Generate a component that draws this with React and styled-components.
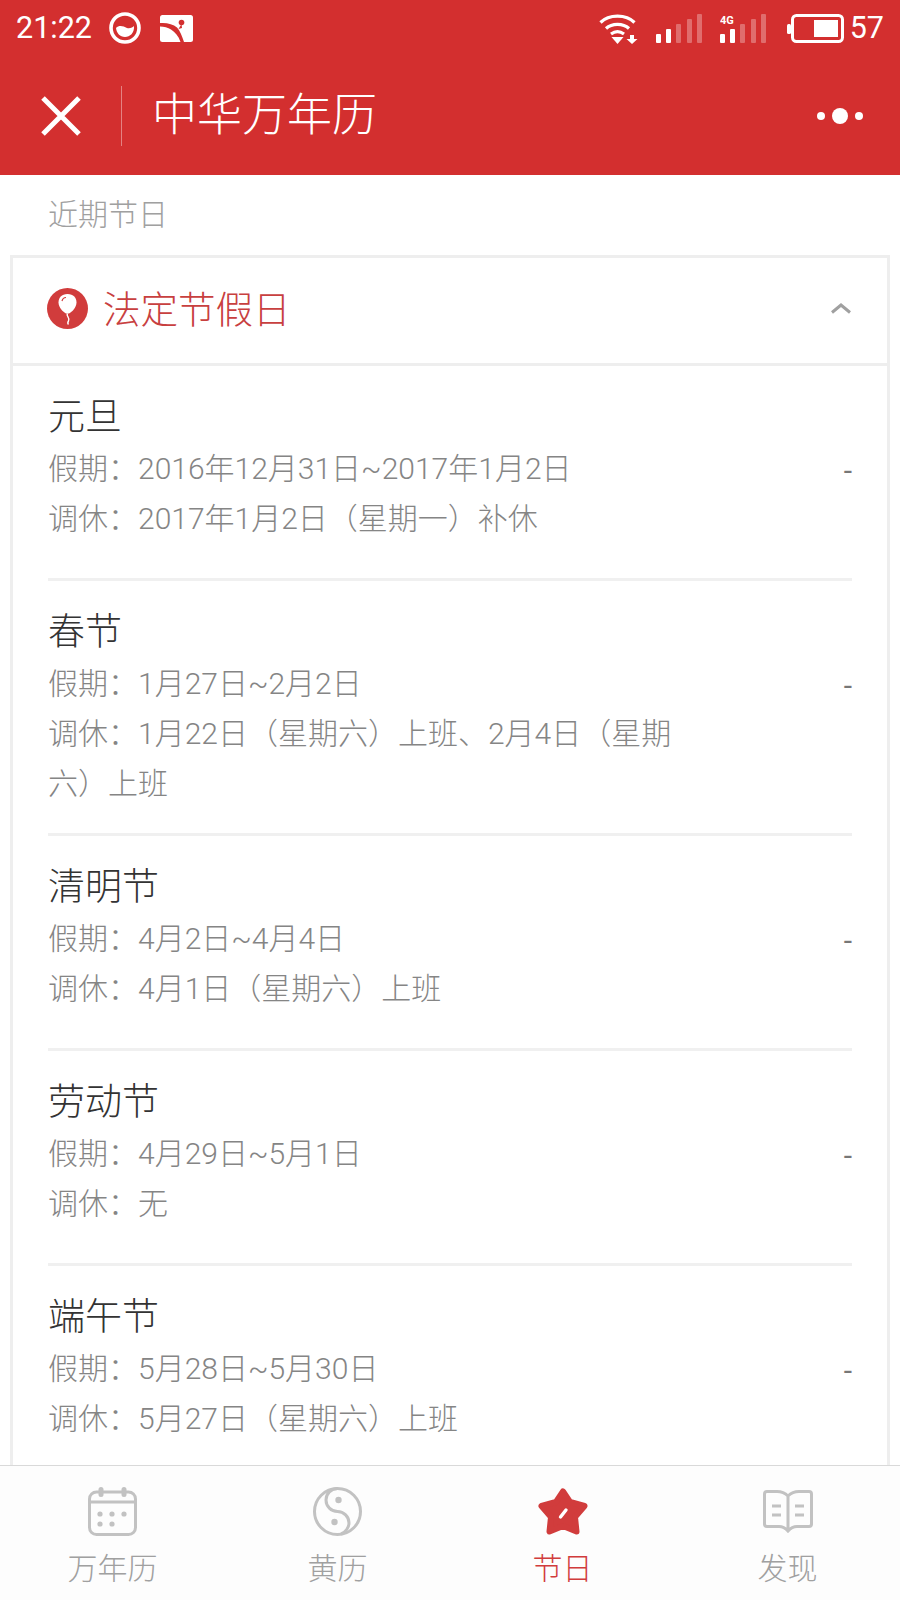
import React from 'react';
import styled, { createGlobalStyle } from 'styled-components';

const RED = '#d32f2f';
const ACTIVE = '#d13c3c';
const GREY_ICON = '#c2c2c2';

const GlobalStyle = createGlobalStyle`
  html, body {
    margin: 0;
    padding: 0;
    background: #fff;
  }
  body {
    font-family: Roboto, "Noto Sans CJK SC", sans-serif;
    font-weight: 300;
  }
`;

const Page = styled.div`
  width: 900px;
  height: 1600px;
  display: flex;
  flex-direction: column;
  overflow: hidden;
`;

const Header = styled.header`
  background: ${RED};
  color: #fff;
  flex: none;
`;

const StatusBar = styled.div`
  height: 56px;
  display: flex;
  align-items: center;
  padding: 0 16px 0 16px;
`;

const StatusTime = styled.span`
  font-size: 30.5px;
  font-weight: 400;
  line-height: 56px;
  margin-right: 17px;
`;

const StatusLeftIcon = styled.svg`
  display: block;
  margin-right: 19px;
`;

const StatusRight = styled.div`
  margin-left: auto;
  display: flex;
  align-items: center;
  gap: 18px;
`;

const BatterySlot = styled.div`
  margin-left: 3px;
`;

const BatteryText = styled.span`
  font-size: 30.5px;
  font-weight: 400;
  line-height: 56px;
  margin-left: -12px;
`;

const NavBar = styled.div`
  height: 119px;
  display: flex;
  align-items: center;
  padding: 0 37px 0 41px;
`;

const NavDivider = styled.div`
  width: 1px;
  height: 60px;
  background: rgba(255, 255, 255, 0.4);
  margin: 0 30px 0 40px;
`;

const NavTitle = styled.h1`
  margin: 0;
  font-size: 45px;
  font-weight: 300;
  line-height: 60px;
`;

const Dots = styled.div`
  margin-left: auto;
  display: flex;
  align-items: center;
  gap: 7px;
`;

const Dot = styled.span`
  display: block;
  width: ${(p) => (p.$big ? 16 : 8)}px;
  height: ${(p) => (p.$big ? 16 : 8)}px;
  border-radius: 50%;
  background: #fff;
`;

const Content = styled.main`
  flex: 1;
  min-height: 0;
  overflow: hidden;
`;

const SectionLabel = styled.div`
  height: 80px;
  box-sizing: border-box;
  display: flex;
  align-items: center;
  padding: 0 0 6px 48px;
  font-size: 30px;
  color: #a0a0a0;
`;

const Card = styled.section`
  margin: 0 10px;
  border: 3px solid #eeeeee;
`;

const CardHeader = styled.div`
  height: 105px;
  box-sizing: content-box;
  display: flex;
  align-items: center;
  padding: 0 36px 0 34px;
  border-bottom: 3px solid #eeeeee;
`;

const BalloonBox = styled.svg`
  display: block;
  flex: none;
  margin-bottom: 5px;
`;

const CardTitle = styled.h2`
  margin: 0 0 8px 15px;
  font-size: 37.5px;
  font-weight: 300;
  color: #c8403f;
`;

const Chevron = styled.svg`
  margin: 0 0 4px auto;
  display: block;
`;

const Row = styled.div`
  margin: 0 35px;
  min-height: 215px;
  padding: 24px 0 24px;
  box-sizing: border-box;
  border-bottom: 3px solid #f0f0f0;
`;

const RowTitle = styled.div`
  font-size: 37px;
  line-height: 56px;
  color: #333;
`;

const RowBody = styled.div`
  display: flex;
  justify-content: space-between;
  align-items: flex-start;
`;

const RowLines = styled.div`
  width: 635px;
  margin-top: -2px;
  font-size: 30px;
  line-height: 50px;
  color: #858585;
`;

const Dash = styled.span`
  font-size: 30px;
  font-weight: 400;
  line-height: 50px;
  color: #777;
`;

const TabBar = styled.nav`
  flex: none;
  height: 135px;
  box-sizing: border-box;
  display: flex;
  padding-top: 21px;
  background: #fdfdfd;
  border-top: 1px solid #d9d9d9;
`;

const Tab = styled.div`
  flex: 1;
  display: flex;
  flex-direction: column;
  align-items: center;
`;

const TabIcon = styled.div`
  height: 49px;
  display: flex;
  align-items: center;
  justify-content: center;
`;

const TabLabel = styled.span`
  margin-top: 13px;
  font-size: 30px;
  line-height: 40px;
  color: ${(p) => (p.$active ? ACTIVE : '#a0a0a0')};
`;

const SmileIcon = () => (
  <StatusLeftIcon width="32" height="32" viewBox="0 0 32 32">
    <circle cx="16" cy="16" r="14" fill="none" stroke="#fff" strokeWidth="3.6" />
    <path d="M7 16C10 13 14 14 18 16C21 17 24 15 25 14C25.500 21 21 25 16 25C11 25 7.500 21 7 16Z" fill="#fff" />
  </StatusLeftIcon>
);

const PictureIcon = () => (
  <StatusLeftIcon width="33" height="27" viewBox="0 0 33 27">
    <rect width="33" height="27" rx="2.500" fill="#fff" />
    <path d="M0 8C7 7.500 13 9 17 12.500C20 15.500 22 21 24 27H20.500C18.500 21 15 17 11 14.500C8 12.500 4 11.500 0 11.500Z" fill={RED} />
    <circle cx="21.500" cy="7.500" r="2.800" fill={RED} />
    <path d="M21.500 9L18.500 14L22 13Z" fill={RED} />
  </StatusLeftIcon>
);

const WifiIcon = () => (
  <svg width="39" height="31" viewBox="0 0 39 31" style={{ display: 'block' }}>
    <g fill="none" stroke="#fff" strokeWidth="3.200">
      <path d="M1.500 9.500C10 1 27 1 35.500 9.500" />
      <path d="M7 15.500C13 10 24 10 30 15.500" />
      <path d="M12 21C16 18 21 18 25 21" />
    </g>
    <path d="M12.500 24H24.500L18.500 31Z" fill="#fff" />
    <path d="M31 22H35V26H38.500L33 31L27.500 26H31Z" fill="#fff" />
  </svg>
);

const barTops = [20, 15, 10, 5, 0];
const barLefts = [0, 10, 20, 31, 41];

const SignalIcon = ({ label }) => (
  <svg width="46" height="29" viewBox="0 0 46 29" style={{ display: 'block' }}>
    {barTops.map((top, i) => (
      <rect
        key={i}
        x={barLefts[i]}
        y={top}
        width="5"
        height={29 - top}
        rx="1"
        fill="#fff"
        opacity={i < 2 ? 1 : 0.3}
      />
    ))}
    {label && (
      <text x="0" y="10" fontSize="11" fontWeight="700" fontFamily="Roboto, sans-serif" fill="#fff">
        {label}
      </text>
    )}
  </svg>
);

const BatteryIcon = () => (
  <svg width="57" height="29" viewBox="0 0 57 29" style={{ display: 'block' }}>
    <rect x="0" y="10" width="4" height="10" rx="1.500" fill="#fff" />
    <rect x="5.500" y="1.500" width="50" height="26" rx="4" fill="none" stroke="#fff" strokeWidth="3" />
    <rect x="27" y="6" width="24" height="17" fill="#fff" />
  </svg>
);

const BalloonIcon = () => (
  <BalloonBox width="41" height="41" viewBox="0 0 41 41">
    <circle cx="20.500" cy="20.500" r="20.500" fill={ACTIVE} />
    <path d="M20.500 6C14.500 6 11.500 10 11.500 14.500C11.500 19.500 16 24 19 25.500H22C25 24 29.500 19.500 29.500 14.500C29.500 10 26.500 6 20.500 6Z" fill="#fff" />
    <path d="M20.500 25.500C18.500 28 23.500 30 21.500 33C20.500 34.500 20.500 35.500 21.500 36.500" fill="none" stroke="#fff" strokeWidth="1.400" />
    <path d="M15 13C15.500 11 17 9.500 19 9.500" fill="none" stroke={ACTIVE} strokeWidth="1.200" />
  </BalloonBox>
);

const CalendarIcon = () => (
  <svg width="49" height="49" viewBox="0 0 49 49">
    <g fill="none" stroke={GREY_ICON} strokeWidth="3">
      <rect x="1.500" y="5" width="46" height="42.500" rx="7" />
      <path d="M2 15H47" />
    </g>
    <g fill={GREY_ICON}>
      <rect x="10.500" y="0" width="5" height="10" rx="2.500" />
      <rect x="33.500" y="0" width="5" height="10" rx="2.500" />
      <circle cx="12" cy="27" r="2.600" />
      <circle cx="24" cy="27" r="2.600" />
      <circle cx="36" cy="27" r="2.600" />
      <circle cx="12" cy="37" r="2.600" />
      <circle cx="24" cy="37" r="2.600" />
    </g>
  </svg>
);

const YinYangIcon = () => (
  <svg width="49" height="49" viewBox="0 0 49 49">
    <g fill="none" stroke={GREY_ICON} strokeWidth="3">
      <circle cx="24.500" cy="24.500" r="23" />
      <path d="M24.500 1.500A11.500 11.500 0 0 0 24.500 24.500A11.500 11.500 0 0 1 36 36C36 40 33 45 28 47" />
    </g>
    <circle cx="25.500" cy="13" r="3.200" fill={GREY_ICON} />
    <circle cx="21.500" cy="35" r="3.200" fill={GREY_ICON} />
  </svg>
);

const StarIcon = () => (
  <svg width="50" height="47" viewBox="0 0 50 47">
    <polygon
      points="25,3.500 32,14 46.500,18 37,29 38.500,43.500 25,38 11.500,43.500 13,29 3.500,18 18,14"
      fill={ACTIVE}
      stroke={ACTIVE}
      strokeWidth="6"
      strokeLinejoin="round"
    />
    <path d="M22.500 29L28 22" stroke="#fff" strokeWidth="3.400" strokeLinecap="round" />
  </svg>
);

const BookIcon = () => (
  <svg width="50" height="43" viewBox="0 0 50 43">
    <g fill="none" stroke={GREY_ICON} strokeWidth="3">
      <path d="M25 6C22 3 18 1.500 14 1.500H4Q1.500 1.500 1.500 4V34Q1.500 36.500 4 36.500H16Q21 36.500 25 41Q29 36.500 34 36.500H46Q48.500 36.500 48.500 34V4Q48.500 1.500 46 1.500H36C32 1.500 28 3 25 6V41" />
      <path d="M9 16H18M9 25H18M32 16H41M32 25H41" />
    </g>
  </svg>
);

const holidays = [
  { name: '元旦', lines: ['假期：2016年12月31日~2017年1月2日', '调休：2017年1月2日（星期一）补休'] },
  { name: '春节', lines: ['假期：1月27日~2月2日', '调休：1月22日（星期六）上班、2月4日（星期六）上班'] },
  { name: '清明节', lines: ['假期：4月2日~4月4日', '调休：4月1日（星期六）上班'] },
  { name: '劳动节', lines: ['假期：4月29日~5月1日', '调休：无'] },
  { name: '端午节', lines: ['假期：5月28日~5月30日', '调休：5月27日（星期六）上班'] },
];

const tabs = [
  { label: '万年历', icon: <CalendarIcon /> },
  { label: '黄历', icon: <YinYangIcon /> },
  { label: '节日', icon: <StarIcon />, active: true },
  { label: '发现', icon: <BookIcon /> },
];

const App = () => (
  <Page>
    <GlobalStyle />
    <Header>
      <StatusBar>
        <StatusTime>21:22</StatusTime>
        <SmileIcon />
        <PictureIcon />
        <StatusRight>
          <WifiIcon />
          <SignalIcon />
          <SignalIcon label="4G" />
          <BatterySlot>
            <BatteryIcon />
          </BatterySlot>
          <BatteryText>57</BatteryText>
        </StatusRight>
      </StatusBar>
      <NavBar>
        <svg width="40" height="40" viewBox="0 0 40 40" style={{ display: 'block', flex: 'none' }}>
          <path d="M2 2L38 38M38 2L2 38" stroke="#fff" strokeWidth="5" />
        </svg>
        <NavDivider />
        <NavTitle>中华万年历</NavTitle>
        <Dots>
          <Dot />
          <Dot $big />
          <Dot />
        </Dots>
      </NavBar>
    </Header>
    <Content>
      <SectionLabel>近期节日</SectionLabel>
      <Card>
        <CardHeader>
          <BalloonIcon />
          <CardTitle>法定节假日</CardTitle>
          <Chevron width="20" height="11" viewBox="0 0 20 11">
            <path d="M1 9.500L10 2L19 9.500" fill="none" stroke="#a0a0a0" strokeWidth="3" />
          </Chevron>
        </CardHeader>
        {holidays.map((h) => (
          <Row key={h.name}>
            <RowTitle>{h.name}</RowTitle>
            <RowBody>
              <RowLines>
                {h.lines.map((line) => (
                  <div key={line}>{line}</div>
                ))}
              </RowLines>
              <Dash>-</Dash>
            </RowBody>
          </Row>
        ))}
      </Card>
    </Content>
    <TabBar>
      {tabs.map((t) => (
        <Tab key={t.label}>
          <TabIcon>{t.icon}</TabIcon>
          <TabLabel $active={t.active}>{t.label}</TabLabel>
        </Tab>
      ))}
    </TabBar>
  </Page>
);

export default App;
